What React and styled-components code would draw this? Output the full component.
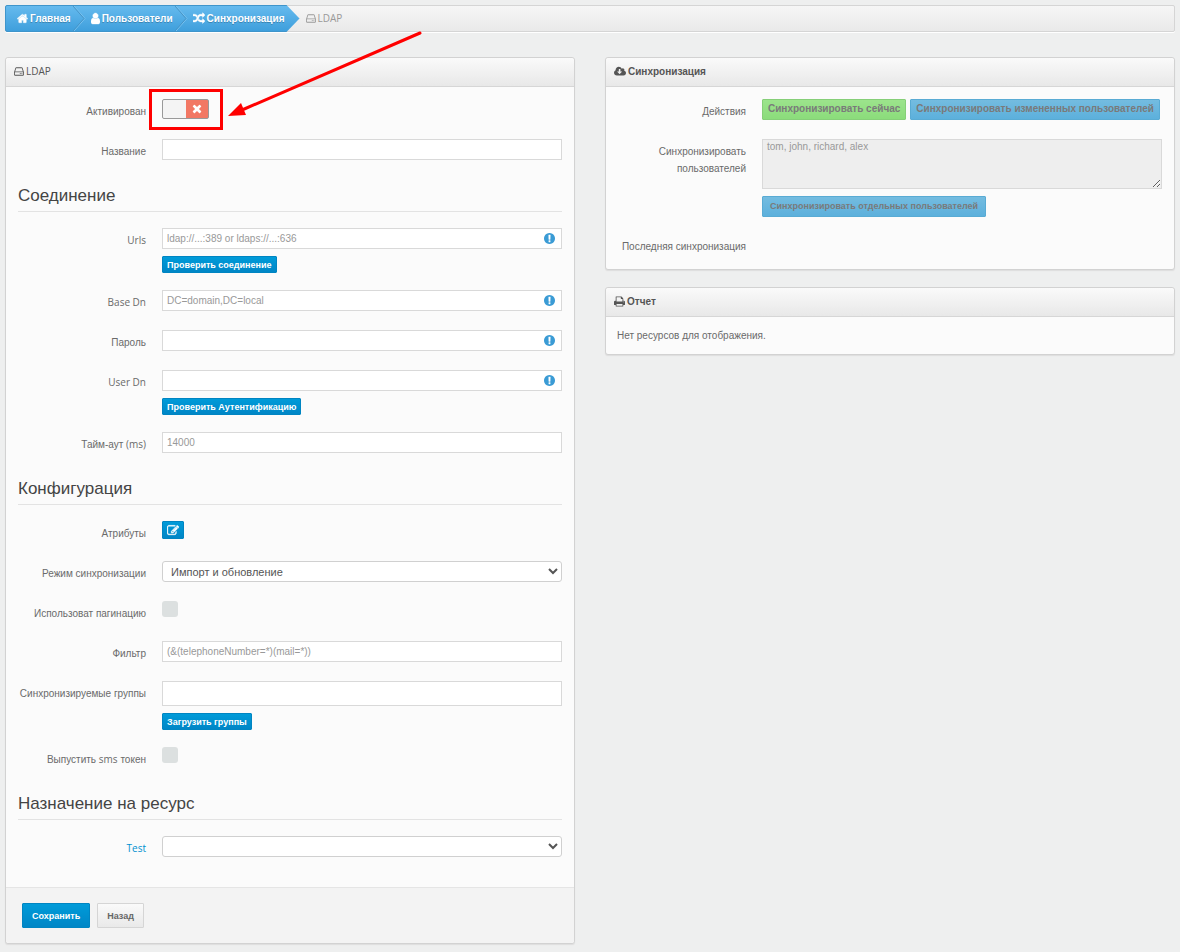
import React from 'react';
import styled, { createGlobalStyle, css } from 'styled-components';

const GlobalStyle = createGlobalStyle`
  *, *::before, *::after {
    box-sizing: border-box;
  }

  body {
    margin: 0;
    background: #eeefef;
    color: #6a6a6a;
    font-family: 'Liberation Sans', Arial, sans-serif;
    font-size: 10px;
    line-height: 17px;
  }

  button, input, select, textarea {
    font-family: inherit;
  }
`;

// Icons
const ICONS = {
  home: {
    box: '64 0 1664 1792',
    width: 11,
    d: 'M1472 992v480q0 26-19 45t-45 19h-384v-384h-256v384h-384q-26 0-45-19t-19-45v-480q0-1 .5-3t.5-3l575-474 575 474q1 2 1 6zm223-69l-62 74q-8 9-21 11h-3q-13 0-21-7l-692-577-692 577q-12 8-24 7-13-2-21-11l-62-74q-8-10-7-23.5t11-21.5l719-599q32-26 76-26t76 26l244 204v-195q0-14 9-23t23-9h192q14 0 23 9t9 23v408l219 182q10 8 11 21.5t-7 23.5z',
  },
  user: {
    box: '256 0 1280 1792',
    width: 9,
    d: 'M1536 1399q0 109-62.5 187t-150.5 78h-854q-88 0-150.5-78t-62.5-187q0-85 8.5-160.5t31.5-152 58.5-131 94-89 134.5-34.5q131 128 313 128t313-128q76 0 134.5 34.5t94 89 58.5 131 31.5 152 8.5 160.5zm-256-887q0 159-112.5 271.5t-271.5 112.5-271.5-112.5-112.5-271.5 112.5-271.5 271.5-112.5 271.5 112.5 112.5 271.5z',
  },
  random: {
    box: '0 0 1792 1792',
    width: 12,
    d: 'M666 481q-60 92-137 273-22-45-37-72.5t-40.5-63.5-51-56.5-63-35-81.5-14.5h-224q-14 0-23-9t-9-23v-192q0-14 9-23t23-9h224q250 0 410 225zm1126 799q0 14-9 23l-320 320q-9 9-23 9-13 0-22.5-9.5t-9.5-22.5v-192q-32 0-85 .5t-81 1-73-1-71-5-64-10.5-63-18.5-58-28.5-59-40-55-53.5-56-69.5q59-93 136-273 22 45 37 72.5t40.5 63.5 51 56.5 63 35 81.5 14.5h256v-192q0-14 9-23t23-9q12 0 24 10l319 319q9 9 9 23zm0-896q0 14-9 23l-320 320q-9 9-23 9-13 0-22.5-9.5t-9.5-22.5v-192h-256q-48 0-87 15t-69 45-51 61.5-45 77.5q-32 62-78 171-29 66-49.5 111t-54 105-64 100-74 83-90 68.5-106.5 42-128 16.5h-224q-14 0-23-9t-9-23v-192q0-14 9-23t23-9h224q48 0 87-15t69-45 51-61.5 45-77.5q32-62 78-171 29-66 49.5-111t54-105 64-100 74-83 90-68.5 106.5-42 128-16.5h256v-192q0-14 9-23t23-9q12 0 24 10l319 319q9 9 9 23z',
  },
  hdd: {
    box: '128 0 1536 1792',
    width: 10,
    d: 'M1168 1216q0 33-23.5 56.5t-56.5 23.5-56.5-23.5-23.5-56.5 23.5-56.5 56.5-23.5 56.5 23.5 23.5 56.5zm256 0q0 33-23.5 56.5t-56.5 23.5-56.5-23.5-23.5-56.5 23.5-56.5 56.5-23.5 56.5 23.5 23.5 56.5zm112 160v-320q0-13-9.5-22.5t-22.5-9.5h-1216q-13 0-22.5 9.5t-9.5 22.5v320q0 13 9.5 22.5t22.5 9.5h1216q13 0 22.5-9.5t9.5-22.5zm-1230-480h1180l-157-482q-4-13-16-21.5t-26-8.5h-782q-14 0-26 8.5t-16 21.5zm1358 160v320q0 66-47 113t-113 47h-1216q-66 0-113-47t-47-113v-320q0-25 16-75l197-606q17-53 63-86t101-33h782q55 0 101 33t63 86l197 606q16 50 16 75z',
  },
  cloud: {
    box: '-64 0 1920 1792',
    width: 12,
    d: 'M1216 928q0-14-9-23t-23-9h-224v-352q0-13-9.5-22.5t-22.5-9.5h-192q-13 0-22.5 9.5t-9.5 22.5v352h-224q-13 0-22.5 9.5t-9.5 22.5q0 14 9 23l352 352q9 9 23 9t23-9l351-351q10-12 10-24zm640 224q0 159-112.5 271.5t-271.5 112.5h-1088q-185 0-316.5-131.5t-131.5-316.5q0-130 70-240t188-165q-2-30-2-43 0-212 150-362t362-150q156 0 285.5 87t188.5 231q71-62 166-62 106 0 181 75t75 181q0 76-41 138 130 31 213.5 135.5t83.5 238.5z',
  },
  print: {
    box: '64 0 1664 1792',
    width: 11,
    d: 'M448 1536h896v-256h-896v256zm0-640h896v-384h-160q-40 0-68-28t-28-68v-160h-640v640zm1152 64q0-26-19-45t-45-19-45 19-19 45 19 45 45 19 45-19 19-45zm128 0v416q0 13-9.5 22.5t-22.5 9.5h-224v160q0 40-28 68t-68 28h-960q-40 0-68-28t-28-68v-160h-224q-13 0-22.5-9.5t-9.5-22.5v-416q0-79 56.5-135.5t135.5-56.5h64v-544q0-40 28-68t68-28h672q40 0 88 20t76 48l152 152q28 28 48 76t20 88v256h64q79 0 135.5 56.5t56.5 135.5z',
  },
  info: {
    box: '128 0 1536 1792',
    width: 11,
    d: 'M896 128q209 0 385.5 103t279.5 279.5 103 385.5-103 385.5-279.5 279.5-385.5 103-385.5-103-279.5-279.5-103-385.5 103-385.5 279.5-279.5 385.5-103zm128 1247v-190q0-14-9-23.5t-22-9.5h-192q-13 0-23 10t-10 23v190q0 13 10 23t23 10h192q13 0 22-9.5t9-23.5zm-2-344l18-621q0-12-10-18-10-8-24-8h-220q-14 0-24 8-10 6-10 18l17 621q0 10 10 17.5t24 7.5h185q14 0 23.5-7.5t10.5-17.5z',
  },
  times: {
    box: '192 0 1408 1792',
    width: 10,
    d: 'M1490 1322q0 40-28 68l-136 136q-28 28-68 28t-68-28l-294-294-294 294q-28 28-68 28t-68-28l-136-136q-28-28-28-68t28-68l294-294-294-294q-28-28-28-68t28-68l136-136q28-28 68-28t68 28l294 294 294-294q28-28 68-28t68 28l136 136q28 28 28 68t-28 68l-294 294 294 294q28 28 28 68z',
  },
  edit: {
    box: '0 0 1792 1792',
    width: 12,
    d: 'M888 1184l116-116-152-152-116 116v56h96v96h56zm440-720q-16-16-33 1l-350 350q-17 17-1 33t33-1l350-350q17-17 1-33zm80 594v190q0 119-84.5 203.5t-203.5 84.5h-832q-119 0-203.5-84.5t-84.5-203.5v-832q0-119 84.5-203.5t203.5-84.5h832q63 0 117 25 15 7 18 23 3 17-9 29l-49 49q-14 14-32 8-23-6-45-6h-832q-66 0-113 47t-47 113v832q0 66 47 113t113 47h832q66 0 113-47t47-113v-126q0-13 9-22l64-64q15-15 35-7t20 29zm-96-738l288 288-672 672h-288v-288zm444 132l-92 92-288-288 92-92q28-28 68-28t68 28l152 152q28 28 28 68t-28 68z',
  },
};

const Glyph = styled.svg`
  flex: none;
  width: ${(props) => props.$width}px;
  height: 13px;
  fill: ${(props) => props.$color || 'currentColor'};
`;

// Small white glyphs get an outline so they keep their weight
const Icon = ({ name, color, bold }) => (
  <Glyph viewBox={ICONS[name].box} $width={ICONS[name].width} $color={color} aria-hidden="true">
    <path d={ICONS[name].d} stroke={bold ? 'currentColor' : 'none'} strokeWidth="60" />
  </Glyph>
);

// Latin words use a different face than the Cyrillic ones
const Latin = styled.span`
  font-family: 'Open Sans', sans-serif;
`;

// Page
const Page = styled.div`
  display: flex;
  flex-direction: column;
  gap: 25px;
  padding: 5px 5px 8px;
`;

const Columns = styled.main`
  display: grid;
  grid-template-columns: minmax(0, 1fr) minmax(0, 1fr);
  align-items: start;
  gap: 30px;
`;

const Column = styled.div`
  display: flex;
  flex-direction: column;
  gap: 17px;
`;

// Breadcrumbs
const Breadcrumbs = styled.nav`
  display: flex;
  height: 27px;
  background: linear-gradient(#f6f6f6, #e9e9e9);
  border: 1px solid #d5d5d5;
  border-radius: 2px;
  box-shadow: 0 1px 0 #fff;
`;

const Trail = styled.div`
  display: flex;
  margin: -1px 0 -1px -1px;
  padding: 0 14px 0 11px;
  background: linear-gradient(#65baee, #3f9fdc);
  border: 1px solid #3f95cb;
  border-radius: 2px 0 0 2px;
  clip-path: polygon(0 0, calc(100% - 13px) 0, 100% 50%, calc(100% - 13px) 100%, 0 100%);
`;

const crumb = css`
  display: flex;
  align-items: center;
  gap: 2px;
`;

const CrumbLink = styled.a`
  ${crumb}
  color: #fff;
  font-weight: bold;
  text-decoration: none;
  text-shadow: 0 1px 0 #3b85b4;
`;

const CrumbCurrent = styled.span`
  ${crumb}
  padding-left: 6px;
  color: #999;
`;

const Divider = styled.svg`
  width: 13px;
  height: 25px;
  margin: 0 5px 0 2px;
  fill: none;
`;

const CrumbDivider = () => (
  <Divider viewBox="0 0 13 25" aria-hidden="true">
    <path d="M1 0L12 12.5L1 25" stroke="#79c3f0" />
    <path d="M0 0L11 12.5L0 25" stroke="#4594c6" />
  </Divider>
);

// Panels
const Panel = styled.section`
  background: #fbfbfb;
  border: 1px solid #d2d2d2;
  border-radius: 3px;
  box-shadow: 0 1px 1px #ddd;
`;

const PanelHeader = styled.header`
  display: flex;
  align-items: center;
  gap: 2px;
  height: 29px;
  padding: 0 8px 1px;
  background: linear-gradient(#fafafa, #e8e8e8);
  border-bottom: 1px solid #d6d6d6;
  border-radius: 3px 3px 0 0;
  color: #555;
`;

const PanelTitle = styled.h1`
  margin: 0;
  font-size: 10px;
  font-weight: ${(props) => (props.$light ? 'normal' : 'bold')};
`;

const PanelBody = styled.div`
  padding: 12px 12px ${(props) => (props.$roomy ? '28px' : '12px')};
`;

const PanelFooter = styled.footer`
  display: flex;
  gap: 7px;
  padding: 15px 16px;
  background: #f3f3f3;
  border-top: 1px solid #e5e5e5;
  border-radius: 0 0 3px 3px;
`;

const PanelText = styled.p`
  margin: 0;
  padding: 10px 11px;
`;

// Form
const Fields = styled.div`
  display: flex;
  flex-direction: column;
  gap: 17px;
`;

const SectionTitle = styled.h2`
  margin: 19px 0 16px;
  border-bottom: 1px solid #e3e3e3;
  color: #444;
  font-size: 17px;
  font-weight: normal;
  line-height: 30px;
`;

const Row = styled.div`
  display: grid;
  grid-template-columns: minmax(0, 8fr) minmax(0, 25fr);
  column-gap: 16px;
  min-height: 23px;
`;

const Label = styled.label`
  padding-top: 4px;
  text-align: right;
`;

const ResourceLink = styled.a`
  color: #0090d0;
  text-decoration: none;
`;

const Control = styled.div`
  display: flex;
  flex-direction: column;
  align-items: flex-start;
  gap: 7px;
`;

const InputBox = styled.div`
  display: flex;
  align-items: center;
  align-self: stretch;
  height: ${(props) => (props.$tall ? '25px' : '21px')};
  padding-right: 6px;
  background: #fff;
  border: 1px solid #d9d9d9;
`;

const Input = styled.input`
  flex: 1;
  min-width: 0;
  height: 100%;
  padding: 0 4px;
  background: transparent;
  border: 0;
  color: #666;
  font-size: 10px;

  &::placeholder {
    color: #999;
  }
`;

const Select = styled.select`
  align-self: stretch;
  height: 21px;
  padding: 0 4px;
  background: #fff;
  border: 1px solid #d0d0d0;
  border-radius: 3px;
  color: #555;
  font-size: 11px;
`;

const Textarea = styled.textarea`
  display: block;
  align-self: stretch;
  height: 50px;
  padding: 0 4px;
  background: #eee;
  border: 1px solid #d9d9d9;
  font-size: 10px;
  line-height: 14px;

  &::placeholder {
    color: #999;
  }
`;

const Checkbox = styled.input`
  appearance: none;
  width: 16px;
  height: 16px;
  margin: 0;
  background: #dce0e0;
  border-radius: 3px;

  &:checked {
    background: #0090d0;
  }
`;

// Buttons
const button = css`
  display: inline-flex;
  align-items: center;
  justify-content: center;
  border: 1px solid;
  border-radius: 1px;
  font-weight: bold;
  white-space: nowrap;
`;

const SmallButton = styled.button`
  ${button}
  height: 17px;
  padding: 0 4px;
  background: linear-gradient(#009bd9, #0086c6);
  border-color: #0085c2;
  color: #fff;
  font-size: 9px;
`;

const IconButton = styled(SmallButton)`
  height: 18px;
`;

const FooterButton = styled.button`
  ${button}
  height: 25px;
  padding: 0 9px;
  background: ${(props) => (props.$primary ? 'linear-gradient(#009bd9, #0086c6)' : 'linear-gradient(#fafafa, #e9e9e9)')};
  border-color: ${(props) => (props.$primary ? '#0085c2' : '#d5d5d5')};
  color: ${(props) => (props.$primary ? '#fff' : '#666')};
  font-size: 9px;
`;

const SyncButton = styled.button`
  ${button}
  height: 21px;
  padding: 0 ${(props) => (props.$small ? '7px' : '5px')} 2px;
  background: ${(props) => (props.$green ? 'linear-gradient(#9ce48c, #8bdc7b)' : 'linear-gradient(#74bce0, #5cb0dc)')};
  border-color: ${(props) => (props.$green ? '#86cf78' : '#59abd4')};
  color: #7a7a7a;
  font-size: ${(props) => (props.$small ? '9px' : '10px')};
`;

const ButtonGroup = styled.div`
  display: flex;
  flex-wrap: wrap;
  align-items: flex-start;
  gap: 4px;
`;

// Switch
const Switch = styled.span`
  position: relative;
  display: inline-flex;
  width: 47px;
  height: 20px;
`;

const SwitchInput = styled.input`
  appearance: none;
  width: 100%;
  height: 100%;
  margin: 0;
  background: linear-gradient(90deg, #f4f4f4 50%, #f27864 50%);
  border: 1px solid #999;
  border-radius: 2px;

  &:checked {
    background: linear-gradient(90deg, #8bdc7b 50%, #f4f4f4 50%);
  }
`;

const SwitchMark = styled.span`
  position: absolute;
  top: 3px;
  right: 7px;
  display: flex;
  color: #fff;
  pointer-events: none;
`;

// Callout drawn over the form
const Highlight = styled.span`
  position: absolute;
  inset: -10px -14px -11px -13px;
  border: 3px solid #f00;
  pointer-events: none;
`;

const Arrow = styled.svg`
  position: absolute;
  left: 64px;
  bottom: 0;
  width: 200px;
  height: 90px;
  pointer-events: none;
`;

const TextField = ({ id, label, placeholder, type = 'text', info, tall, children }) => (
  <Row>
    <Label htmlFor={id}>{label}</Label>
    <Control>
      <InputBox $tall={tall}>
        <Input id={id} type={type} placeholder={placeholder} />
        {info && <Icon name="info" color="#3a9bd5" />}
      </InputBox>
      {children}
    </Control>
  </Row>
);

const CheckField = ({ id, label }) => (
  <Row>
    <Label htmlFor={id}>{label}</Label>
    <Control>
      <Checkbox id={id} type="checkbox" />
    </Control>
  </Row>
);

const App = () => {
  return (
    <>
      <GlobalStyle />
      <Page>
        <Breadcrumbs>
          <Trail>
            <CrumbLink href="#home"><Icon name="home" bold />Главная</CrumbLink>
            <CrumbDivider />
            <CrumbLink href="#users"><Icon name="user" bold />Пользователи</CrumbLink>
            <CrumbDivider />
            <CrumbLink href="#sync"><Icon name="random" bold />Синхронизация</CrumbLink>
          </Trail>
          <CrumbCurrent><Icon name="hdd" /><Latin>LDAP</Latin></CrumbCurrent>
        </Breadcrumbs>

        <Columns>
          <Panel>
            <PanelHeader>
              <Icon name="hdd" />
              <PanelTitle $light><Latin>LDAP</Latin></PanelTitle>
            </PanelHeader>
            <PanelBody $roomy>
              <Fields>
                <Row>
                  <Label htmlFor="enabled">Активирован</Label>
                  <Control>
                    <Switch>
                      <SwitchInput id="enabled" type="checkbox" role="switch" />
                      <SwitchMark><Icon name="times" /></SwitchMark>
                      <Highlight />
                      <Arrow viewBox="0 0 200 90" aria-hidden="true">
                        <path d="M194 4L16 81" fill="none" stroke="#f00" strokeWidth="3" strokeLinecap="round" />
                        <path d="M2 87L15 74L20 86Z" fill="#f00" />
                      </Arrow>
                    </Switch>
                  </Control>
                </Row>
                <TextField id="name" label="Название" />
              </Fields>

              <SectionTitle>Соединение</SectionTitle>
              <Fields>
                <TextField id="urls" label={<Latin>Urls</Latin>} placeholder="ldap://...:389 or ldaps://...:636" info>
                  <SmallButton type="button">Проверить соединение</SmallButton>
                </TextField>
                <TextField id="base-dn" label={<Latin>Base Dn</Latin>} placeholder="DC=domain,DC=local" info />
                <TextField id="password" label="Пароль" type="password" info />
                <TextField id="user-dn" label={<Latin>User Dn</Latin>} info>
                  <SmallButton type="button">Проверить Аутентификацию</SmallButton>
                </TextField>
                <TextField id="timeout" label={<>Тайм-аут <Latin>(ms)</Latin></>} placeholder="14000" />
              </Fields>

              <SectionTitle>Конфигурация</SectionTitle>
              <Fields>
                <Row>
                  <Label htmlFor="attributes">Атрибуты</Label>
                  <Control>
                    <IconButton id="attributes" type="button">
                      <Icon name="edit" bold />
                    </IconButton>
                  </Control>
                </Row>
                <Row>
                  <Label htmlFor="mode">Режим синхронизации</Label>
                  <Control>
                    <Select id="mode">
                      <option>Импорт и обновление</option>
                    </Select>
                  </Control>
                </Row>
                <CheckField id="paging" label="Использоват пагинацию" />
                <TextField id="filter" label="Фильтр" placeholder="(&(telephoneNumber=*)(mail=*))" />
                <TextField id="groups" label="Синхронизируемые группы" tall>
                  <SmallButton type="button">Загрузить группы</SmallButton>
                </TextField>
                <CheckField id="sms" label={<>Выпустить <Latin>sms</Latin> токен</>} />
              </Fields>

              <SectionTitle>Назначение на ресурс</SectionTitle>
              <Row>
                <Label as="div">
                  <ResourceLink href="#test"><Latin>Test</Latin></ResourceLink>
                </Label>
                <Control>
                  <Select aria-label="Test" />
                </Control>
              </Row>
            </PanelBody>
            <PanelFooter>
              <FooterButton type="submit" $primary>Сохранить</FooterButton>
              <FooterButton type="button">Назад</FooterButton>
            </PanelFooter>
          </Panel>

          <Column>
            <Panel>
              <PanelHeader>
                <Icon name="cloud" />
                <PanelTitle>Синхронизация</PanelTitle>
              </PanelHeader>
              <PanelBody>
                <Fields>
                  <Row>
                    <Label as="div">Действия</Label>
                    <ButtonGroup>
                      <SyncButton type="button" $green>Синхронизировать сейчас</SyncButton>
                      <SyncButton type="button">Синхронизировать измененных пользователей</SyncButton>
                    </ButtonGroup>
                  </Row>
                  <Row>
                    <Label htmlFor="sync-users">Синхронизировать пользователей</Label>
                    <Control>
                      <Textarea id="sync-users" placeholder="tom, john, richard, alex" />
                      <SyncButton type="button" $small>Синхронизировать отдельных пользователей</SyncButton>
                    </Control>
                  </Row>
                  <Row>
                    <Label as="div">Последняя синхронизация</Label>
                  </Row>
                </Fields>
              </PanelBody>
            </Panel>

            <Panel>
              <PanelHeader>
                <Icon name="print" />
                <PanelTitle>Отчет</PanelTitle>
              </PanelHeader>
              <PanelText>Нет ресурсов для отображения.</PanelText>
            </Panel>
          </Column>
        </Columns>
      </Page>
    </>
  );
};

export default App;
